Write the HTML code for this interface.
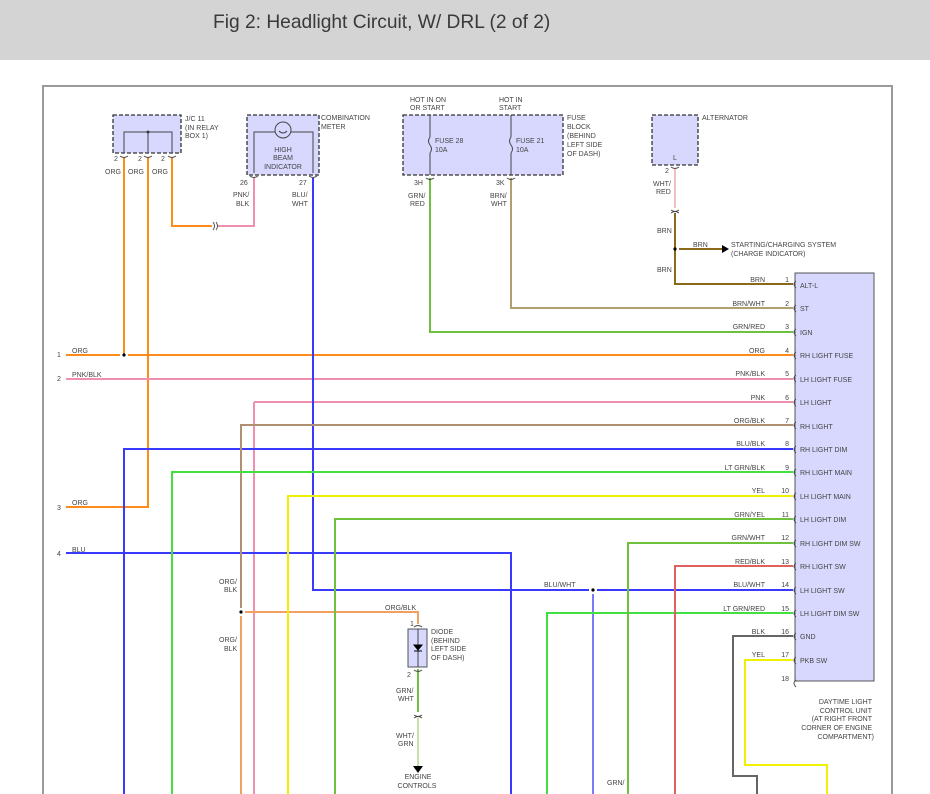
<!DOCTYPE html>
<html><head><meta charset="utf-8"><style>
body{margin:0;background:#fff;width:930px;height:794px;overflow:hidden;font-family:"Liberation Sans",sans-serif}
.hdr{position:absolute;left:0;top:0;width:930px;height:60px;background:#d4d4d4}
.hdr span{position:absolute;left:213px;top:12px;font-size:19.2px;color:#3a3a3a}
svg{position:absolute;left:0;top:0}
text{font-family:"Liberation Sans",sans-serif;font-size:7px;fill:#444}
.e{text-anchor:end}.m{text-anchor:middle}
</style></head><body>
<div class="hdr"><span>Fig 2: Headlight Circuit, W/ DRL (2 of 2)</span></div>
<svg width="930" height="794" viewBox="0 0 930 794">
<g fill="none" stroke="#9a9a9a" stroke-width="2"><path d="M43 794V86H892V794"/></g>
<g fill="#d8d8ff" stroke="#333" stroke-width="1.3" stroke-dasharray="4,2">
<rect x="113" y="115" width="68" height="38"/>
<rect x="247" y="115" width="72" height="60"/>
<rect x="403" y="115" width="160" height="60"/>
<rect x="652" y="115" width="46" height="50"/>
</g>
<rect x="795" y="273" width="79" height="408" fill="#d8d8ff" stroke="#555" stroke-width="1"/>
<rect x="408" y="629" width="19" height="38" fill="#d8d8ff" stroke="#555" stroke-width="1"/>
<g stroke="#444" stroke-width="1" fill="none"><path d="M124 153V132H172V153M148 132V153"/><circle cx="148" cy="132" r="1" fill="#000"/>
<path d="M254 173V132H275M291 132H313V173"/><circle cx="283" cy="130" r="8"/><path d="M279 131q4 4 8 0"/>
<path d="M430 115V137M430 153V175M511 115V137M511 153V175"/><path d="M430 137q-3 4 0 8q3 4 0 8M511 137q-3 4 0 8q3 4 0 8"/>
<path d="M418 629V667"/></g>
<path d="M414 645h8l-4 5z M414 651h8" fill="#000" stroke="#000" stroke-width="1"/>
<g fill="none" stroke-width="2">
<path stroke="#ff8c1a" d="M124 157V355M148 157V507H66M172 157V226H212"/>
<path stroke="#ff8c1a" d="M66 355H120M128 355H793"/>
<path stroke="#f090b0" d="M218 226H254V178M66 379H793M254 402V794M254 402H793"/>
<path stroke="#3a3aff" d="M313 178V590H589M597 590H793M124 794V449H793M66 553H511V794"/>
<path stroke="#7a7aff" d="M593 594V794"/>
<path stroke="#b09070" d="M241 608V425H793"/>
<path stroke="#f0a060" d="M241 616V794M245 612H418V624"/>
<path stroke="#40e040" d="M172 794V472H793M547 794V613H793"/>
<path stroke="#f0f000" d="M288 794V496H793M793 660H745V765H827V794"/>
<path stroke="#70c040" d="M335 794V519H793M628 794V543H793M430 178V332H793M418 669V712"/>
<path stroke="#c8e0b0" d="M418 718V766"/>
<path stroke="#e06060" d="M675 794V566H793"/>
<path stroke="#666" d="M793 636H733V776H757V794"/>
<path stroke="#b0a070" d="M511 178V308H793"/>
<path stroke="#f0c0c0" d="M675 168V208"/>
<path stroke="#8a6a1a" d="M675 213V284H793M679 249H722"/>
</g>
<path d="M722 245l7 4-7 4z" fill="#000"/>
<path d="M413 766h10l-5 7z" fill="#000"/>
<g fill="#000"><circle cx="124" cy="355" r="1.6"/><circle cx="241" cy="612" r="1.6"/><circle cx="593" cy="590" r="1.6"/><circle cx="675" cy="249" r="1.6"/></g>
<g fill="none" stroke="#444" stroke-width="0.9">
<path d="M120 156q4 3 8 0M144 156q4 3 8 0M168 156q4 3 8 0M250 176q4 3 8 0M309 176q4 3 8 0M426 178q4 3 8 0M507 178q4 3 8 0M671 167q4 3 8 0M671 210q4 3 8 0M671 213q4-3 8 0M414 715q4 3 8 0M414 718q4-3 8 0M414 627q4-3 8 0M414 670q4 3 8 0M213 222q3 4 0 8M216 222q3 4 0 8"/>
<path d="M796 281q-4 3 0 7M796 305q-4 3 0 7M796 329q-4 3 0 7M796 352q-4 3 0 7M796 375q-4 3 0 7M796 399q-4 3 0 7M796 422q-4 3 0 7M796 446q-4 3 0 7M796 469q-4 3 0 7M796 493q-4 3 0 7M796 516q-4 3 0 7M796 540q-4 3 0 7M796 563q-4 3 0 7M796 587q-4 3 0 7M796 610q-4 3 0 7M796 633q-4 3 0 7M796 657q-4 3 0 7M796 680q-4 3 0 7"/>
</g>
<text x="185" y="121">J/C 11</text><text x="185" y="130">(IN RELAY</text><text x="185" y="138">BOX 1)</text>
<text x="114" y="161">2</text><text x="138" y="161">2</text><text x="161" y="161">2</text>
<text x="105" y="174">ORG</text><text x="128" y="174">ORG</text><text x="152" y="174">ORG</text>
<text x="321" y="120">COMBINATION</text><text x="321" y="129">METER</text>
<text x="283" y="152" class="m">HIGH</text><text x="283" y="160" class="m">BEAM</text><text x="283" y="169" class="m">INDICATOR</text>
<text x="240" y="185">26</text><text x="299" y="185">27</text>
<text x="233" y="197">PNK/</text><text x="236" y="206">BLK</text><text x="292" y="197">BLU/</text><text x="292" y="206">WHT</text>
<text x="410" y="102">HOT IN ON</text><text x="410" y="110">OR START</text><text x="499" y="102">HOT IN</text><text x="499" y="110">START</text>
<text x="567" y="120">FUSE</text><text x="567" y="129">BLOCK</text><text x="567" y="138">(BEHIND</text><text x="567" y="147">LEFT SIDE</text><text x="567" y="156">OF DASH)</text>
<text x="435" y="143">FUSE 28</text><text x="435" y="152">10A</text><text x="516" y="143">FUSE 21</text><text x="516" y="152">10A</text>
<text x="414" y="185">3H</text><text x="496" y="185">3K</text>
<text x="408" y="198">GRN/</text><text x="410" y="206">RED</text><text x="490" y="198">BRN/</text><text x="491" y="206">WHT</text>
<text x="702" y="120">ALTERNATOR</text><text x="673" y="160">L</text><text x="665" y="173">2</text>
<text x="653" y="186">WHT/</text><text x="656" y="194">RED</text><text x="657" y="233">BRN</text><text x="693" y="247">BRN</text><text x="657" y="272">BRN</text>
<text x="731" y="247">STARTING/CHARGING SYSTEM</text><text x="731" y="256">(CHARGE INDICATOR)</text>
<text x="57" y="357">1</text><text x="72" y="353">ORG</text><text x="57" y="381">2</text><text x="72" y="377">PNK/BLK</text>
<text x="57" y="510">3</text><text x="72" y="505">ORG</text><text x="57" y="556">4</text><text x="72" y="552">BLU</text>
<text x="765" y="282" class="e">BRN</text><text x="765" y="306" class="e">BRN/WHT</text><text x="765" y="329" class="e">GRN/RED</text><text x="765" y="353" class="e">ORG</text><text x="765" y="376" class="e">PNK/BLK</text><text x="765" y="400" class="e">PNK</text><text x="765" y="423" class="e">ORG/BLK</text><text x="765" y="446" class="e">BLU/BLK</text><text x="765" y="470" class="e">LT GRN/BLK</text><text x="765" y="493" class="e">YEL</text><text x="765" y="517" class="e">GRN/YEL</text><text x="765" y="540" class="e">GRN/WHT</text><text x="765" y="564" class="e">RED/BLK</text><text x="765" y="587" class="e">BLU/WHT</text><text x="765" y="611" class="e">LT GRN/RED</text><text x="765" y="634" class="e">BLK</text><text x="765" y="657" class="e">YEL</text>
<text x="789" y="282" class="e">1</text><text x="789" y="306" class="e">2</text><text x="789" y="329" class="e">3</text><text x="789" y="353" class="e">4</text><text x="789" y="376" class="e">5</text><text x="789" y="400" class="e">6</text><text x="789" y="423" class="e">7</text><text x="789" y="446" class="e">8</text><text x="789" y="470" class="e">9</text><text x="789" y="493" class="e">10</text><text x="789" y="517" class="e">11</text><text x="789" y="540" class="e">12</text><text x="789" y="564" class="e">13</text><text x="789" y="587" class="e">14</text><text x="789" y="611" class="e">15</text><text x="789" y="634" class="e">16</text><text x="789" y="657" class="e">17</text><text x="789" y="681" class="e">18</text>
<text x="800" y="288">ALT-L</text><text x="800" y="311">ST</text><text x="800" y="335">IGN</text><text x="800" y="358">RH LIGHT FUSE</text><text x="800" y="382">LH LIGHT FUSE</text><text x="800" y="405">LH LIGHT</text><text x="800" y="429">RH LIGHT</text><text x="800" y="452">RH LIGHT DIM</text><text x="800" y="475">RH LIGHT MAIN</text><text x="800" y="499">LH LIGHT MAIN</text><text x="800" y="522">LH LIGHT DIM</text><text x="800" y="546">RH LIGHT DIM SW</text><text x="800" y="569">RH LIGHT SW</text><text x="800" y="593">LH LIGHT SW</text><text x="800" y="616">LH LIGHT DIM SW</text><text x="800" y="639">GND</text><text x="800" y="663">PKB SW</text>
<text x="872" y="704" class="e">DAYTIME LIGHT</text><text x="872" y="713" class="e">CONTROL UNIT</text><text x="872" y="721" class="e">(AT RIGHT FRONT</text><text x="872" y="730" class="e">CORNER OF ENGINE</text><text x="874" y="739" class="e">COMPARTMENT)</text>
<text x="219" y="584">ORG/</text><text x="224" y="592">BLK</text><text x="219" y="642">ORG/</text><text x="224" y="651">BLK</text>
<text x="385" y="610">ORG/BLK</text><text x="544" y="587">BLU/WHT</text>
<text x="410" y="626">1</text><text x="407" y="677">2</text>
<text x="431" y="634">DIODE</text><text x="431" y="643">(BEHIND</text><text x="431" y="651">LEFT SIDE</text><text x="431" y="660">OF DASH)</text>
<text x="396" y="693">GRN/</text><text x="398" y="701">WHT</text><text x="396" y="738">WHT/</text><text x="398" y="746">GRN</text>
<text x="418" y="779" class="m">ENGINE</text><text x="417" y="788" class="m">CONTROLS</text><text x="607" y="785">GRN/</text>
</svg>
</body></html>
